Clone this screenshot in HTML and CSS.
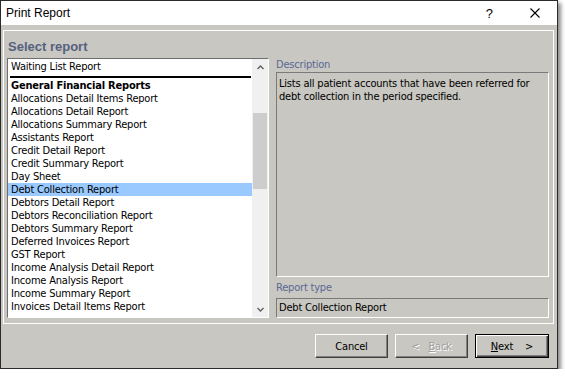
FILE: index.html
```html
<!DOCTYPE html>
<html lang="en">
<head>
  <meta charset="UTF-8">
  <title>Print Report</title>
  <link rel="stylesheet" href="styles.css">
</head>
<body>
  <div class="window">
    <div class="titlebar">
      <span class="title">Print Report</span>
      <span class="help">?</span>
      <svg class="close" width="10" height="10" viewBox="0 0 10 10">
        <path d="M0.5 0.5 L9.5 9.5 M9.5 0.5 L0.5 9.5" stroke="#000" stroke-width="1.1" fill="none"/>
      </svg>
    </div>

    <div class="frame">
      <div class="panel">
        <h1 class="heading">Select report</h1>
        <div class="content">
          <div class="listbox">
            <div class="items">
              <div class="item">Waiting List Report</div>
              <div class="sep"></div>
              <div class="item group">General Financial Reports</div>
              <div class="item">Allocations Detail Items Report</div>
              <div class="item">Allocations Detail Report</div>
              <div class="item">Allocations Summary Report</div>
              <div class="item">Assistants Report</div>
              <div class="item">Credit Detail Report</div>
              <div class="item">Credit Summary Report</div>
              <div class="item">Day Sheet</div>
              <div class="item selected">Debt Collection Report</div>
              <div class="item">Debtors Detail Report</div>
              <div class="item">Debtors Reconciliation Report</div>
              <div class="item">Debtors Summary Report</div>
              <div class="item">Deferred Invoices Report</div>
              <div class="item">GST Report</div>
              <div class="item">Income Analysis Detail Report</div>
              <div class="item">Income Analysis Report</div>
              <div class="item">Income Summary Report</div>
              <div class="item">Invoices Detail Items Report</div>
            </div>
            <div class="scrollbar">
              <div class="arrow">
                <svg width="7" height="5" viewBox="0 0 7 5"><path d="M0.5 4 L3.5 1 L6.5 4" stroke="#606060" stroke-width="1.4" fill="none"/></svg>
              </div>
              <div class="track"><div class="thumb"></div></div>
              <div class="arrow">
                <svg width="7" height="5" viewBox="0 0 7 5"><path d="M0.5 1 L3.5 4 L6.5 1" stroke="#606060" stroke-width="1.4" fill="none"/></svg>
              </div>
            </div>
          </div>

          <div class="details">
            <div class="label">Description</div>
            <div class="field desc">Lists all patient accounts that have been referred for debt collection in the period specified.</div>
            <div class="label type-label">Report type</div>
            <div class="field type">Debt Collection Report</div>
          </div>
        </div>
      </div>

      <div class="buttons">
        <div class="btn">Cancel</div>
        <div class="btn disabled"><span class="chev">&lt;</span><u>B</u>ack</div>
        <div class="btn default"><u>N</u>ext<span class="chev-r">&gt;</span></div>
      </div>
    </div>
  </div>
</body>
</html>
```

FILE: styles.css
```css
body {
  margin: 0;
  background: #fff;
  font-family: "DejaVu Sans Condensed", "DejaVu Sans", sans-serif;
  font-size: 11px;
  letter-spacing: -0.2px;
  color: #000;
}
.window {
  width: 558px;
  height: 369px;
  box-sizing: border-box;
  border: 1px solid #2a2a2a;
  box-shadow: 3px 3px 4px rgba(0, 0, 0, 0.45);
  background: #c8c7c1;
  display: flex;
  flex-direction: column;
}
.titlebar {
  height: 24px;
  flex: none;
  background: #fff;
  display: flex;
  align-items: center;
  padding-left: 5px;
  letter-spacing: 0;
}
.title {
  flex: 1;
  font-family: "Liberation Sans", Arial, sans-serif;
  font-size: 12px;
}
.help {
  font-family: "Liberation Sans", Arial, sans-serif;
  font-size: 13px;
  margin-right: 37px;
}
.close {
  margin-right: 17px;
}
.frame {
  flex: 1;
  padding: 5px 3px 0 2px;
  display: flex;
  flex-direction: column;
}
.panel {
  height: 294px;
  box-sizing: border-box;
  border: 1px solid #fff;
  padding: 8px 4px 5px 3px;
}
.heading {
  margin: 0 0 3px 1px;
  height: 16px;
  font-family: "Liberation Sans", Arial, sans-serif;
  font-size: 13px;
  line-height: 16px;
  font-weight: bold;
  letter-spacing: 0;
  color: #56617f;
}
.content {
  display: flex;
  gap: 7px;
  height: 260px;
}
.listbox {
  width: 262px;
  flex: none;
  box-sizing: border-box;
  border: 1px solid;
  border-color: #6d6d6d #fff #fff #6d6d6d;
  background: #fff;
  display: flex;
  overflow: hidden;
}
.items {
  flex: 1;
  overflow: hidden;
  padding-top: 1px;
}
.item {
  height: 13px;
  line-height: 13px;
  padding-left: 3px;
  white-space: nowrap;
}
.item.group {
  font-weight: bold;
}
.item.selected {
  background: #99c9ff;
}
.sep {
  height: 2px;
  background: #000;
  margin: 3px 1px 1px 2px;
}
.scrollbar {
  width: 16px;
  flex: none;
  background: #f0f0f0;
  display: flex;
  flex-direction: column;
}
.arrow {
  height: 16px;
  display: flex;
  align-items: center;
  justify-content: center;
}
.track {
  flex: 1;
}
.thumb {
  margin: 38px 1px 0;
  height: 76px;
  background: #cdcdcd;
}
.details {
  flex: 1;
  display: flex;
  flex-direction: column;
}
.label {
  height: 14px;
  line-height: 13px;
  color: #5a6895;
}
.type-label {
  height: 21px;
  line-height: 21px;
}
.field {
  box-sizing: border-box;
  border: 1px solid;
  border-color: #7a7a7a #fff #fff #7a7a7a;
  padding: 4px 2px 3px;
  line-height: 13px;
}
.desc {
  flex: 1;
}
.type {
  height: 20px;
  padding: 0 2px;
  line-height: 18px;
}
.buttons {
  display: flex;
  justify-content: flex-end;
  gap: 7px;
  padding: 10px 5px 0 0;
}
.btn {
  width: 73px;
  height: 24px;
  box-sizing: border-box;
  border: 1px solid;
  border-color: #fff #404040 #404040 #fff;
  box-shadow: inset -1px -1px #808080;
  display: flex;
  align-items: center;
  justify-content: center;
}
.btn.disabled {
  color: #a0a0a0;
  text-shadow: 1px 1px #fff;
}
.btn.default {
  width: 74px;
  border: 1px solid #000;
  box-shadow: inset 1px 1px #fff, inset -1px -1px #404040, inset -2px -2px #808080;
}
.chev {
  margin-right: 9px;
}
.chev-r {
  margin-left: 12px;
}
```
